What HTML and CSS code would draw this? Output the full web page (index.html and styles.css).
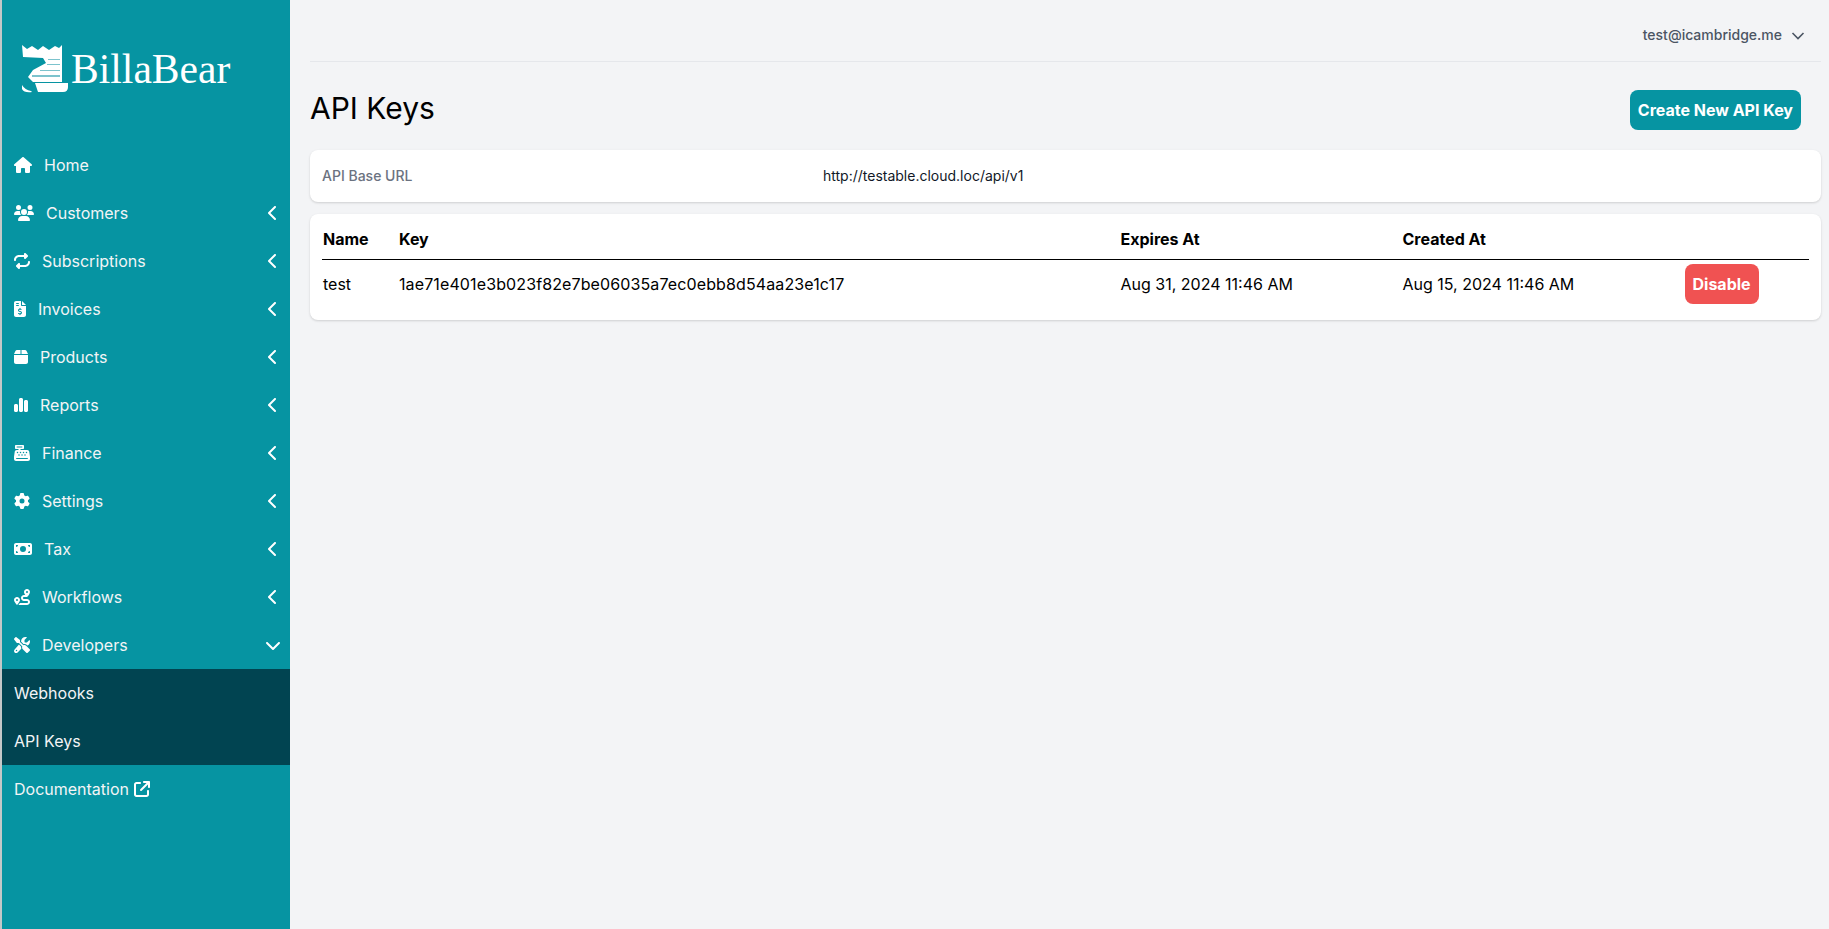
FILE: index.html
```html
<!DOCTYPE html>
<html lang="en">
<head>
  <meta charset="UTF-8">
  <title>API Keys - BillaBear</title>
  <link rel="stylesheet" href="styles.css">
</head>
<body>
  <div class="app">
    <aside class="sidebar">
      <div class="logo">
        <svg class="logo-mark" viewBox="0 0 46 48" width="46" height="48">
          <path fill="#fff" d="M0 0 L5 4 L10 1 L16 5 L21 1 L27 5 L33 1 L37 3 L40 0 V37 H11 L6 32 L11 25 L24 18 L21 13 L1 12 Z"/>
          <path fill="#fff" d="M13 38 H46 V42 Q46 47 41 47 H16 Z"/>
          <path fill="#fff" d="M0 40 Q3 45 9 46 L10 47 Q2 48 0 44 Z"/>
          <path fill="#7cc3cd" d="M26 14h12v1H26zM25 19h13v1H25zM18 25h20v1H18zM10 30h28v2H10z"/>
        </svg>
        <span class="logo-text">BillaBear</span>
      </div>
      <nav class="menu">
        <a class="menu-item">
          <svg class="ic" viewBox="0 0 576 512" width="18" height="16"><path d="M575.800 255.500c0 18-15 32.100-32 32.100h-32l.7 160.200c0 2.700-.2 5.400-.5 8.100V472c0 22.100-17.900 40-40 40H456c-1.100 0-2.200 0-3.300-.1c-1.400 .1-2.800 .1-4.200 .1H416 392c-22.100 0-40-17.900-40-40V448 384c0-17.700-14.300-32-32-32H256c-17.700 0-32 14.300-32 32v64 24c0 22.100-17.900 40-40 40H160 128.100c-1.500 0-3-.1-4.500-.2c-1.200 .1-2.400 .2-3.600 .2H104c-22.100 0-40-17.900-40-40V360c0-.9 0-1.900 .1-2.800V287.600H32c-18 0-32-14-32-32.100c0-9 3-17 10-24L266.400 8c7-7 15-8 22-8s15 2 21 7L564.800 231.500c8 7 12 15 11 24z"/></svg>
          <span class="label">Home</span>
        </a>
        <a class="menu-item">
          <svg class="ic" viewBox="0 0 640 512" width="20" height="16"><path d="M144 0a80 80 0 1 1 0 160A80 80 0 1 1 144 0zM512 0a80 80 0 1 1 0 160A80 80 0 1 1 512 0zM0 298.700C0 239.800 47.800 192 106.700 192h42.700c15.900 0 31 3.500 44.600 9.700c-1.300 7.200-1.900 14.700-1.900 22.300c0 38.200 16.800 72.500 43.300 96c-.2 0-.4 0-.7 0H21.300C9.600 320 0 310.400 0 298.700zM405.300 320c-.2 0-.4 0-.7 0c26.600-23.500 43.300-57.800 43.300-96c0-7.600-.7-15-1.900-22.300c13.600-6.300 28.700-9.700 44.600-9.700h42.700C592.200 192 640 239.800 640 298.700c0 11.800-9.600 21.300-21.300 21.300H405.300zM224 224a96 96 0 1 1 192 0 96 96 0 1 1 -192 0zM128 485.300C128 411.700 187.700 352 261.300 352H378.700C452.300 352 512 411.700 512 485.300c0 14.700-11.900 26.700-26.700 26.700H154.700c-14.700 0-26.700-11.900-26.700-26.700z"/></svg>
          <span class="label">Customers</span>
          <svg class="chev" viewBox="0 0 320 512" width="10" height="16"><path d="M9.400 233.400c-12.500 12.500-12.500 32.800 0 45.300l192 192c12.500 12.500 32.800 12.500 45.300 0s12.500-32.800 0-45.300L77.300 256 246.600 86.600c12.500-12.500 12.500-32.800 0-45.300s-32.800-12.500-45.300 0l-192 192z"/></svg>
        </a>
        <a class="menu-item">
          <svg class="ic" viewBox="0 0 512 512" width="16" height="16"><path d="M0 224c0 17.700 14.300 32 32 32s32-14.300 32-32c0-53 43-96 96-96H320v32c0 12.900 7.800 24.600 19.800 29.600s25.700 2.200 34.900-6.900l64-64c12.500-12.500 12.500-32.800 0-45.300l-64-64c-9.200-9.200-22.900-11.900-34.900-6.900S320 19.100 320 32V64H160C71.600 64 0 135.600 0 224zm512 64c0-17.700-14.300-32-32-32s-32 14.300-32 32c0 53-43 96-96 96H192V352c0-12.900-7.800-24.600-19.800-29.600s-25.700-2.200-34.900 6.900l-64 64c-12.500 12.500-12.500 32.800 0 45.300l64 64c9.200 9.200 22.900 11.900 34.900 6.900s19.800-16.600 19.800-29.600V448H352c88.400 0 160-71.600 160-160z"/></svg>
          <span class="label">Subscriptions</span>
          <svg class="chev" viewBox="0 0 320 512" width="10" height="16"><path d="M9.400 233.400c-12.500 12.500-12.500 32.800 0 45.300l192 192c12.500 12.500 32.800 12.500 45.300 0s12.500-32.800 0-45.300L77.300 256 246.600 86.600c12.500-12.500 12.500-32.800 0-45.300s-32.800-12.500-45.300 0l-192 192z"/></svg>
        </a>
        <a class="menu-item">
          <svg class="ic" viewBox="0 0 384 512" width="12" height="16"><path d="M64 0C28.700 0 0 28.700 0 64V448c0 35.300 28.700 64 64 64H320c35.300 0 64-28.700 64-64V160H256c-17.700 0-32-14.300-32-32V0H64zM256 0V128H384L256 0zM64 80c0-8.800 7.200-16 16-16h64c8.800 0 16 7.200 16 16s-7.200 16-16 16H80c-8.800 0-16-7.200-16-16zm0 64c0-8.800 7.200-16 16-16h64c8.800 0 16 7.200 16 16s-7.200 16-16 16H80c-8.800 0-16-7.200-16-16zm128 72c8.800 0 16 7.200 16 16v17.300c8.500 1.200 16.700 3.100 24.100 5.100c8.500 2.300 13.600 11 11.300 19.600s-11 13.600-19.600 11.300c-11.100-3-22-5.200-32.100-5.300c-8.400-.1-17.400 1.800-23.600 5.500c-5.700 3.400-8.100 7.300-8.100 12.800c0 3.700 1.300 6.500 7.300 10.100c6.900 4.100 16.600 7.100 29.200 10.900l.5 .1 0 0 0 0c11.300 3.400 25.300 7.600 36.300 14.600c12.100 7.600 22.400 19.700 22.700 38.200c.3 19.300-9.600 33.300-22.900 41.600c-7.700 4.800-16.400 7.600-25.100 9.100V440c0 8.800-7.200 16-16 16s-16-7.200-16-16V422.200c-11.200-2.100-21.700-5.700-30.900-8.900h0c-2.100-.7-4.200-1.400-6.200-2.100c-8.400-2.800-12.900-11.900-10.100-20.200s11.900-12.900 20.200-10.100c2.500 .8 4.800 1.600 7.100 2.400h0l0 0c13.600 4.600 24.600 8.400 36.300 8.700c9.100 .3 17.900-1.700 23.700-5.300c5.100-3.200 7.900-7.300 7.800-14c-.1-4.600-1.800-7.800-7.700-11.600c-6.800-4.300-16.500-7.400-29-11.200l-1.600-.5 0 0c-11-3.300-24.300-7.300-34.800-13.700c-12-7.200-22.600-18.900-22.700-37.300c-.1-19.400 10.800-32.800 23.800-40.500c7.500-4.400 15.800-7.200 24.100-8.700V232c0-8.800 7.200-16 16-16z"/></svg>
          <span class="label">Invoices</span>
          <svg class="chev" viewBox="0 0 320 512" width="10" height="16"><path d="M9.400 233.400c-12.500 12.500-12.500 32.800 0 45.300l192 192c12.500 12.500 32.800 12.500 45.300 0s12.500-32.800 0-45.300L77.300 256 246.600 86.600c12.500-12.500 12.500-32.800 0-45.300s-32.800-12.500-45.300 0l-192 192z"/></svg>
        </a>
        <a class="menu-item">
          <svg class="ic" viewBox="0 0 448 512" width="14" height="16"><path d="M50.700 58.500L0 160H208V32H93.700C75.500 32 58.900 42.300 50.700 58.500zM240 160H448L397.300 58.500C389.100 42.300 372.500 32 354.300 32H240V160zm208 32H0V416c0 35.300 28.700 64 64 64H384c35.300 0 64-28.700 64-64V192z"/></svg>
          <span class="label">Products</span>
          <svg class="chev" viewBox="0 0 320 512" width="10" height="16"><path d="M9.400 233.400c-12.500 12.500-12.500 32.800 0 45.300l192 192c12.500 12.500 32.800 12.500 45.300 0s12.500-32.800 0-45.300L77.300 256 246.600 86.600c12.500-12.500 12.500-32.800 0-45.300s-32.800-12.500-45.300 0l-192 192z"/></svg>
        </a>
        <a class="menu-item">
          <svg class="ic" viewBox="0 0 448 512" width="14" height="16"><path d="M160 80c0-26.500 21.500-48 48-48h32c26.500 0 48 21.500 48 48V432c0 26.500-21.500 48-48 48H208c-26.500 0-48-21.500-48-48V80zM0 272c0-26.500 21.500-48 48-48H80c26.500 0 48 21.500 48 48V432c0 26.500-21.500 48-48 48H48c-26.500 0-48-21.500-48-48V272zM368 96h32c26.500 0 48 21.500 48 48V432c0 26.500-21.500 48-48 48H368c-26.500 0-48-21.500-48-48V144c0-26.500 21.500-48 48-48z"/></svg>
          <span class="label">Reports</span>
          <svg class="chev" viewBox="0 0 320 512" width="10" height="16"><path d="M9.400 233.400c-12.500 12.500-12.500 32.800 0 45.300l192 192c12.500 12.500 32.800 12.500 45.300 0s12.500-32.800 0-45.300L77.300 256 246.600 86.600c12.500-12.500 12.500-32.800 0-45.300s-32.800-12.500-45.300 0l-192 192z"/></svg>
        </a>
        <a class="menu-item">
          <svg class="ic" viewBox="0 0 512 512" width="16" height="16"><path d="M64 0C46.300 0 32 14.300 32 32V96c0 17.700 14.300 32 32 32h80v32H87c-31.600 0-58.500 23.100-63.300 54.400L1.100 364.100C.4 368.800 0 373.600 0 378.400V448c0 35.300 28.700 64 64 64H448c35.300 0 64-28.700 64-64V378.400c0-4.800-.4-9.600-1.100-14.400L488.200 214.400C483.500 183.100 456.600 160 425 160H208V128h80c17.700 0 32-14.300 32-32V32c0-17.700-14.300-32-32-32H64zM96 48H256c8.800 0 16 7.200 16 16s-7.200 16-16 16H96c-8.800 0-16-7.200-16-16s7.200-16 16-16zM64 432c0-8.800 7.200-16 16-16H432c8.800 0 16 7.200 16 16s-7.200 16-16 16H80c-8.800 0-16-7.200-16-16zm48-168a24 24 0 1 1 0-48 24 24 0 1 1 0 48zm120-24a24 24 0 1 1 -48 0 24 24 0 1 1 48 0zM160 344a24 24 0 1 1 0-48 24 24 0 1 1 0 48zM328 240a24 24 0 1 1 -48 0 24 24 0 1 1 48 0zM256 344a24 24 0 1 1 0-48 24 24 0 1 1 0 48zM424 240a24 24 0 1 1 -48 0 24 24 0 1 1 48 0zM352 344a24 24 0 1 1 0-48 24 24 0 1 1 0 48z"/></svg>
          <span class="label">Finance</span>
          <svg class="chev" viewBox="0 0 320 512" width="10" height="16"><path d="M9.400 233.400c-12.500 12.500-12.500 32.800 0 45.300l192 192c12.500 12.500 32.800 12.500 45.300 0s12.500-32.800 0-45.300L77.300 256 246.600 86.600c12.500-12.500 12.500-32.800 0-45.300s-32.800-12.500-45.300 0l-192 192z"/></svg>
        </a>
        <a class="menu-item">
          <svg class="ic" viewBox="0 0 512 512" width="16" height="16"><path d="M495.900 166.600c3.200 8.700 .5 18.400-6.400 24.600l-43.300 39.400c1.100 8.300 1.700 16.800 1.700 25.400s-.6 17.100-1.700 25.400l43.300 39.400c6.900 6.200 9.600 15.900 6.400 24.600c-4.400 11.900-9.700 23.300-15.800 34.300l-4.700 8.100c-6.600 11-14 21.400-22.100 31.200c-5.900 7.200-15.700 9.600-24.500 6.800l-55.700-17.700c-13.400 10.300-28.200 18.900-44 25.400l-12.500 57.100c-2 9.100-9 16.300-18.200 17.800c-13.800 2.300-28 3.500-42.500 3.500s-28.700-1.200-42.500-3.500c-9.200-1.500-16.200-8.700-18.200-17.800l-12.500-57.100c-15.800-6.500-30.600-15.100-44-25.400L83.100 425.900c-8.800 2.800-18.600 .3-24.500-6.800c-8.100-9.800-15.500-20.200-22.100-31.200l-4.700-8.100c-6.100-11-11.400-22.400-15.800-34.300c-3.200-8.700-.5-18.400 6.400-24.600l43.300-39.400C64.600 273.100 64 264.600 64 256s.6-17.100 1.700-25.400L22.400 191.200c-6.900-6.200-9.600-15.900-6.400-24.600c4.400-11.900 9.700-23.300 15.800-34.300l4.700-8.100c6.600-11 14-21.400 22.100-31.200c5.900-7.200 15.700-9.600 24.500-6.800l55.700 17.700c13.400-10.300 28.200-18.900 44-25.400l12.500-57.100c2-9.100 9-16.300 18.200-17.800C227.300 1.200 241.500 0 256 0s28.700 1.200 42.500 3.500c9.200 1.500 16.200 8.700 18.200 17.800l12.500 57.100c15.800 6.500 30.600 15.100 44 25.400l55.700-17.700c8.800-2.800 18.600-.3 24.500 6.800c8.100 9.800 15.500 20.200 22.100 31.200l4.700 8.100c6.100 11 11.400 22.400 15.800 34.300zM256 336a80 80 0 1 0 0-160 80 80 0 1 0 0 160z"/></svg>
          <span class="label">Settings</span>
          <svg class="chev" viewBox="0 0 320 512" width="10" height="16"><path d="M9.400 233.400c-12.500 12.500-12.500 32.800 0 45.300l192 192c12.500 12.500 32.800 12.500 45.300 0s12.500-32.800 0-45.300L77.300 256 246.600 86.600c12.500-12.500 12.500-32.800 0-45.300s-32.800-12.500-45.300 0l-192 192z"/></svg>
        </a>
        <a class="menu-item">
          <svg class="ic" viewBox="0 0 576 512" width="18" height="16"><path d="M64 64C28.700 64 0 92.700 0 128V384c0 35.300 28.700 64 64 64H512c35.300 0 64-28.700 64-64V128c0-35.300-28.700-64-64-64H64zm64 320H64V320c35.300 0 64 28.700 64 64zM64 192V128h64c0 35.300-28.700 64-64 64zM448 384c0-35.300 28.700-64 64-64v64H448zm64-192c-35.300 0-64-28.700-64-64h64v64zM288 160a96 96 0 1 1 0 192 96 96 0 1 1 0-192z"/></svg>
          <span class="label">Tax</span>
          <svg class="chev" viewBox="0 0 320 512" width="10" height="16"><path d="M9.400 233.400c-12.500 12.500-12.500 32.800 0 45.300l192 192c12.500 12.500 32.800 12.500 45.300 0s12.500-32.800 0-45.300L77.300 256 246.600 86.600c12.500-12.500 12.500-32.800 0-45.300s-32.800-12.500-45.300 0l-192 192z"/></svg>
        </a>
        <a class="menu-item">
          <svg class="ic" viewBox="0 0 512 512" width="16" height="16"><path d="M512 96c0 50.200-59.100 125.100-84.600 155c-3.800 4.400-9.400 6.100-14.500 5H320c-17.700 0-32 14.300-32 32s14.300 32 32 32h96c53 0 96 43 96 96s-43 96-96 96H139.600c8.700-9.900 19.300-22.600 30-36.800c6.300-8.400 12.800-17.600 19-27.200H416c17.700 0 32-14.300 32-32s-14.300-32-32-32H320c-53 0-96-43-96-96s43-96 96-96h39.800c-21-31.500-39.800-67.700-39.800-96c0-53 43-96 96-96s96 43 96 96zM117.100 489.100c-3.800 4.300-7.200 8.100-10.100 11.300l-1.800 2-.2-.2c-6 4.600-14.600 4-20-1.800C59.800 473 0 402.500 0 352c0-53 43-96 96-96s96 43 96 96c0 30-21.100 67-43.500 97.900c-10.700 14.700-21.700 28-30.800 38.500l-.6 .7zM128 352a32 32 0 1 0 -64 0 32 32 0 1 0 64 0zM416 128a32 32 0 1 0 0-64 32 32 0 1 0 0 64z"/></svg>
          <span class="label">Workflows</span>
          <svg class="chev" viewBox="0 0 320 512" width="10" height="16"><path d="M9.400 233.400c-12.500 12.500-12.500 32.800 0 45.300l192 192c12.500 12.500 32.800 12.500 45.300 0s12.500-32.800 0-45.300L77.300 256 246.600 86.600c12.500-12.500 12.500-32.800 0-45.300s-32.800-12.500-45.300 0l-192 192z"/></svg>
        </a>
        <a class="menu-item">
          <svg class="ic" viewBox="0 0 512 512" width="16" height="16"><path d="M78.600 5C69.100-2.400 55.600-1.500 47 7L7 47c-8.500 8.500-9.400 22-2.100 31.600l80 104c4.500 5.900 11.600 9.400 19 9.400h54.100l109 109c-14.700 29-10 65.400 14.300 89.600l112 112c12.500 12.500 32.800 12.500 45.300 0l64-64c12.500-12.500 12.500-32.800 0-45.300l-112-112c-24.200-24.200-60.600-29-89.600-14.300l-109-109V104c0-7.500-3.500-14.500-9.400-19L78.600 5zM19.900 396.100C7.200 408.800 0 426.100 0 444.100C0 481.600 30.400 512 67.900 512c18 0 35.300-7.200 48-19.900L233.700 374.300c-7.800-20.900-9-43.600-3.500-65.100L160 239.100l-140.100 157zM512 144c0-10.500-1.100-20.700-3.200-30.500c-2.400-11.200-16.100-14.100-24.200-6l-63.900 63.900c-3 3-7.100 4.700-11.300 4.700H352c-8.800 0-16-7.200-16-16V102.600c0-4.200 1.700-8.300 4.700-11.300l63.900-63.900c8.100-8.100 5.200-21.800-6-24.200C388.700 1.100 378.500 0 368 0C288.500 0 224 64.500 224 144l0 .8 85.300 85.300c36-9.100 75.800 .5 104 28.700L429 274.500c49-23 83-72.800 83-130.500zM56 432a24 24 0 1 1 48 0 24 24 0 1 1 -48 0z"/></svg>
          <span class="label">Developers</span>
          <svg class="chev chev-down" viewBox="0 0 512 512" width="16" height="16"><path d="M233.400 406.600c12.500 12.500 32.800 12.500 45.300 0l192-192c12.500-12.500 12.500-32.800 0-45.300s-32.800-12.500-45.300 0L256 338.700 86.600 169.400c-12.500-12.500-32.800-12.500-45.300 0s-12.500 32.800 0 45.300l192 192z"/></svg>
        </a>
        <div class="submenu">
          <a class="menu-item">Webhooks</a>
          <a class="menu-item">API Keys</a>
        </div>
        <a class="menu-item">
          Documentation
          <svg class="ext" viewBox="0 0 512 512" width="16" height="16"><path d="M320 0c-17.700 0-32 14.300-32 32s14.300 32 32 32h82.700L201.400 265.400c-12.500 12.500-12.500 32.800 0 45.300s32.800 12.500 45.300 0L448 109.300V192c0 17.700 14.300 32 32 32s32-14.300 32-32V32c0-17.700-14.300-32-32-32H320zM80 32C35.800 32 0 67.800 0 112V432c0 44.200 35.800 80 80 80H400c44.200 0 80-35.800 80-80V320c0-17.700-14.300-32-32-32s-32 14.300-32 32V432c0 8.800-7.200 16-16 16H80c-8.800 0-16-7.200-16-16V112c0-8.800 7.200-16 16-16H192c17.700 0 32-14.300 32-32s-14.300-32-32-32H80z"/></svg>
        </a>
      </nav>
    </aside>
    <main class="main">
      <header class="topbar">
        <span class="user">test@icambridge.me</span>
        <svg class="user-chev" viewBox="0 0 14 8" width="14" height="8"><path d="M1.500 1 L7 6.500 L12.500 1"/></svg>
      </header>
      <div class="page-head">
        <h1>API Keys</h1>
        <button class="btn btn-primary">Create New API Key</button>
      </div>
      <section class="card base-url">
        <div class="base-label">API Base URL</div>
        <div class="base-value">http://testable.cloud.loc/api/v1</div>
      </section>
      <section class="card keys">
        <table>
          <thead>
            <tr>
              <th class="col-name">Name</th>
              <th class="col-key">Key</th>
              <th class="col-date">Expires At</th>
              <th class="col-date">Created At</th>
              <th></th>
            </tr>
          </thead>
          <tbody>
            <tr>
              <td>test</td>
              <td class="key-value">1ae71e401e3b023f82e7be06035a7ec0ebb8d54aa23e1c17</td>
              <td>Aug 31, 2024 11:46 AM</td>
              <td>Aug 15, 2024 11:46 AM</td>
              <td><button class="btn btn-danger">Disable</button></td>
            </tr>
          </tbody>
        </table>
      </section>
    </main>
  </div>
</body>
</html>
```

FILE: styles.css
```css
* { box-sizing: border-box; }
html, body { margin: 0; height: 100%; }
body { font-family: Inter, "Liberation Sans", sans-serif; font-size: 16px; line-height: 24px; color: #000; background: #f3f4f6; overflow: hidden; }

.app { display: flex; height: 929px; }

.sidebar { width: 290px; flex-shrink: 0; background: #0694a2; color: #fff; border-left: 2px solid #c3c8c8; display: flex; flex-direction: column; }
.logo { height: 141px; padding: 45px 0 0 20px; display: flex; align-items: flex-start; }
.logo-mark { flex-shrink: 0; margin-right: 3px; }
.logo-text { font-family: "Liberation Serif", serif; font-size: 41.6px; line-height: 48px; }

.menu { display: flex; flex-direction: column; }
.menu-item { height: 48px; padding: 0 12px; display: flex; align-items: center; color: #f3f4f6; }
.ic { fill: #fff; flex-shrink: 0; }
.label { margin-left: 12px; }
.chev { margin-left: auto; fill: #fff; }
.chev-down { margin-right: -3px; }
.submenu { background: #014451; }
.ext { margin-left: 5px; fill: #fff; }

.main { flex: 1; min-width: 0; padding: 0 8px 0 20px; }
.topbar { height: 62px; border-bottom: 1px solid #e5e7eb; display: flex; align-items: center; justify-content: flex-end; padding: 9px 16px 0 0; color: #4b5563; font-size: 14px; font-weight: 500; }
.user-chev { margin: 2px 0 0 9px; fill: none; stroke: #4b5563; stroke-width: 1.6; }
.page-head { height: 88px; padding: 28px 20px 0 0; display: flex; justify-content: space-between; align-items: flex-start; }
h1 { margin: 0; font-size: 30px; line-height: 36px; font-weight: 400; }

.btn { border: 0; border-radius: 8px; color: #fff; font: 700 16px/24px Inter, sans-serif; padding: 8px; }
.btn-primary { background: #0694a2; height: 40px; }
.btn-danger { background: #f05252; height: 40px; }

.card { background: #fff; border-radius: 8px; box-shadow: 0 1px 3px rgba(0,0,0,0.1), 0 1px 2px rgba(0,0,0,0.06); }
.base-url { height: 52px; padding: 0 12px; display: flex; align-items: center; font-size: 14px; margin-bottom: 12px; }
.base-label { width: 501px; color: #6b7280; font-weight: 500; }
.base-value { color: #111827; }

.keys { height: 106px; padding: 0 12px; }
table { width: 100%; border-collapse: separate; border-spacing: 0; table-layout: fixed; }
th { height: 46px; font-weight: 700; text-align: left; border-bottom: 1px solid #000; padding: 5px 0 0 1px; }
td { height: 47px; padding: 0 0 0 1px; }
.key-value { letter-spacing: 0.117px; }
.col-name { width: 76px; }
.col-key { width: 721.5px; }
.col-date { width: 282px; }
```
